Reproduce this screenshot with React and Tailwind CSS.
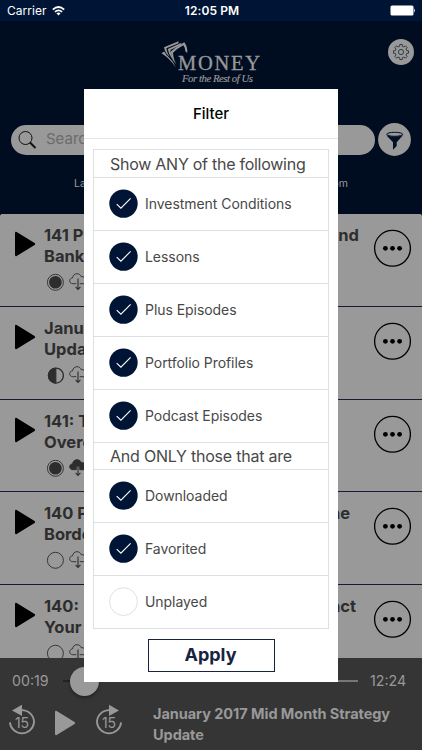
import React from 'react';

function Play({ className }) {
  return (
    <svg className={className} viewBox="0 0 22 26" fill="currentColor">
      <path d="M1 2.2Q1 .3 2.7 1.1L20.6 11.9Q21.8 13 20.6 14L2.7 24.9Q1 25.7 1 23.8Z" />
    </svg>
  );
}

function Cloud({ filled }) {
  return (
    <svg className="h-[18px] w-[20px]" viewBox="0 0 20 18" fill="none" stroke="#2d2d2d" strokeWidth="0.9">
      <path
        d="M7.3 10.7H3.8C1.8 10.7.7 9.3.7 7.7c0-1.7 1.3-2.8 2.8-2.8C3.9 2.3 5.7.7 8 .7c2.2 0 3.7 1.3 4.2 3 2.3-.5 4 .9 4 2.6 1.7.1 3 1 3 2.4 0 1.3-1 2-2.3 2H10.7"
        fill={filled ? '#2d2d2d' : 'none'}
      />
      {filled && <path d="M9 7.5V16.2" stroke="#999" strokeWidth="2.4" />}
      <path d="M9 5.5V16.2M6.6 13.8L9 16.4L11.4 13.8" strokeWidth="1.1" />
    </svg>
  );
}

function Status({ kind }) {
  return (
    <svg className="h-[18px] w-[18px]" viewBox="0 0 18 18" fill="none" stroke="#2d2d2d">
      {kind === 'full' && (
        <>
          <circle cx="9.4" cy="9.3" r="8" strokeWidth="0.9" />
          <circle cx="9.4" cy="9.3" r="6.3" fill="#2d2d2d" stroke="none" />
        </>
      )}
      {kind === 'half' && (
        <>
          <circle cx="9.9" cy="9.6" r="7.5" strokeWidth="1.3" />
          <path d="M9.9 2.1A7.5 7.5 0 0 0 9.9 17.1Z" fill="#2d2d2d" />
        </>
      )}
      {kind === 'empty' && <circle cx="9.4" cy="9.3" r="8" strokeWidth="0.9" />}
    </svg>
  );
}

const episodes = [
  { a: '141 Plus', end: 'and', b: 'Banks', kind: 'full', h: 'h-[93px]', pad: '' },
  { a: 'January', end: '', b: 'Update', kind: 'half', h: 'h-[93px]', pad: '' },
  { a: '141: The', end: '', b: 'Overc', kind: 'full', filled: true, h: 'h-[92px]', pad: '' },
  { a: '140 Plus', end: 'the', b: 'Border', kind: 'empty', h: 'h-[93px]', pad: 'pr-[9px]' },
  { a: '140:', end: 'act', b: 'Your', kind: 'empty', h: 'h-[93px]', pad: 'pr-[3px]' },
];

function Episode({ item }) {
  return (
    <div className={`flex shrink-0 items-start border-b border-[#151b36] bg-[#999] ${item.h}`}>
      <Play className="ml-[14px] mt-[17px] h-[26px] w-[22px] shrink-0 text-black" />
      <div className="ml-2 mt-[11px] w-[315px] text-[16.5px] font-bold leading-[20.5px] text-[#2d2d2d]">
        <div className={`flex justify-between ${item.pad}`}>
          <span>{item.a}</span>
          <span>{item.end}</span>
        </div>
        <div>{item.b}</div>
        <div className="ml-[2px] mt-[7px] flex items-center gap-[5px]">
          <Status kind={item.kind} />
          <Cloud filled={item.filled} />
        </div>
      </div>
      <svg className="ml-[14px] mt-[15px] h-[38px] w-[38px]" viewBox="0 0 38 38">
        <circle cx="19.5" cy="19.3" r="17.9" fill="none" stroke="#000" strokeWidth="1.3" />
        <circle cx="12.4" cy="19.3" r="2.4" />
        <circle cx="19.5" cy="19.3" r="2.4" />
        <circle cx="26.6" cy="19.3" r="2.4" />
      </svg>
    </div>
  );
}

function Option({ label, checked = true, last = false }) {
  return (
    <div className={`flex h-[53px] items-center pb-px pl-[15px] ${last ? '' : 'border-b border-[#dedfe0]'}`}>
      {checked ? (
        <svg className="h-[30px] w-[30px]" viewBox="0 0 30 30">
          <circle cx="14.5" cy="14.6" r="14.2" fill="#001536" />
          <path d="M7.7 15.2L11.9 19.2L21.6 9.4" fill="none" stroke="#fff" strokeWidth="1.1" />
        </svg>
      ) : (
        <svg className="h-[30px] w-[30px]" viewBox="0 0 30 30">
          <circle cx="14.5" cy="14.6" r="13.9" fill="#fff" stroke="#dcdcdc" strokeWidth="0.9" />
        </svg>
      )}
      <span className="ml-[6px] whitespace-nowrap pb-px text-[14px] tracking-[-0.05px] text-[#484848]">{label}</span>
    </div>
  );
}

function Skip({ back }) {
  return (
    <svg className="h-[32px] w-[28px]" viewBox="0 0 28 32" fill="none" stroke="#999" strokeWidth="1.8">
      <g transform={back ? undefined : 'translate(28 0) scale(-1 1)'}>
        <path d="M13 6.2C20.8 6 26 11.7 26 18.3A12.1 12.1 0 0 1 1.9 18.3" />
        <path d="M14 .7V12L4 6.6Z" fill="#999" stroke="none" />
      </g>
      <text x="14" y="23.5" textAnchor="middle" fill="#999" stroke="none" fontSize="14" fontFamily="Inter">15</text>
    </svg>
  );
}

const gear = Array.from({ length: 8 }, (_, i) => {
  const p = (r, d) => {
    const t = ((i * 45 + d - 90) * Math.PI) / 180;
    return `${(13 + r * Math.cos(t)).toFixed(2)} ${(13 + r * Math.sin(t)).toFixed(2)}`;
  };
  return `${i ? 'L' : 'M'}${p(5.8, -14)}L${p(7.6, -9)}L${p(7.6, 9)}L${p(5.8, 14)}`;
}).join('') + 'Z';

export default function App() {
  return (
    <div className="relative flex h-[750px] w-[422px] flex-col overflow-hidden bg-[#000d20] font-['Inter',sans-serif]">
      <div className="grid h-[21px] shrink-0 grid-cols-3 items-center bg-[#001536] px-[7px] text-[12px] text-white">
        <div className="flex items-center gap-[5px] tracking-[0.05px]">
          Carrier
          <svg className="h-[10px] w-[13px]" viewBox="0 0 13 10" fill="none" stroke="#fff" strokeWidth="1.7">
            <path d="M.8 3.6Q6.5-1.6 12.2 3.6M2.9 5.9Q6.5 2.7 10.1 5.9" />
            <path d="M6.5 9.6L4.4 7.3Q6.5 5.7 8.6 7.3Z" fill="#fff" stroke="none" />
          </svg>
        </div>
        <div className="whitespace-nowrap pl-[2px] text-center font-semibold tracking-[0.1px]">12:05 PM</div>
        <svg className="h-[11px] w-[26px] justify-self-end" viewBox="0 0 26 11" fill="#fff">
          <rect x="1.5" y="0.5" width="23" height="10" rx="1.5" />
          <path d="M25 3.5Q26.5 5.5 25 7.5Z" />
        </svg>
      </div>

      <header className="h-[193px] shrink-0">
        <div className="grid h-[70px] grid-cols-[1fr_106px_1fr]">
          <span />
          <svg className="mt-[17px] h-[50px] w-[106px]" viewBox="0 0 106 50" fill="#999">
            <path d="M20.5 3.3L6 9.2Q6.5 12.5 8.5 15.5L11.5 19Q8.8 14 8.3 10.3L20.5 5.2Z" />
            <path d="M23.5 4.7L9.8 11Q10.5 15.5 14 20.5L17.3 25.5Q13 17 12.3 12L22.5 7Z" />
            <path d="M3.5 15.3L6.3 13.5Q8 17 11.5 20Q16 24 17.8 29.5Q12 20.5 3.5 15.3Z" />
            <path d="M12.8 13.5Q17 9.5 26.3 4.2Q29.8 9 29.3 15L27.3 13.2Q27.5 9.8 25.3 7.2Q19 10.5 15 14.7Q15 20 18.3 26.5Q13.5 20.5 12.8 13.5Z" />
            <text x="20" y="31.6" stroke="#999" strokeWidth="0.3" fontSize="20.5" textLength="82" lengthAdjust="spacing" fontFamily="Liberation Serif, serif">MONEY</text>
            <text x="24" y="44.3" stroke="#999" strokeWidth="0.15" fontSize="10.8" fontStyle="italic" textLength="71" fontFamily="Liberation Serif, serif">For the Rest of Us</text>
          </svg>
          <svg className="mr-2 mt-[18px] h-[26px] w-[26px] justify-self-end" viewBox="0 0 26 26">
            <circle cx="13" cy="13" r="13" fill="#999" />
            <path d={gear} fill="none" stroke="#26313e" strokeWidth="0.9" strokeLinejoin="round" />
            <circle cx="13" cy="13" r="2.6" fill="none" stroke="#26313e" strokeWidth="0.9" />
          </svg>
        </div>
        <div className="mt-[32px] flex items-center pl-[11px]">
          <div className="flex h-[30px] w-[364px] items-center rounded-full bg-[#999] pl-[7px] text-[15px] text-[#6b6b6b]">
            <svg className="h-[18px] w-[19px]" viewBox="0 0 19 18" fill="none" stroke="#111">
              <circle cx="7.5" cy="7" r="6.5" strokeWidth="1" />
              <path d="M12 11.5L17.5 17" strokeWidth="1.9" />
            </svg>
            <span className="ml-[9px]">Search</span>
          </div>
          <svg className="ml-[3px] h-[33px] w-[33px]" viewBox="0 0 33 33">
            <circle cx="16.5" cy="16.5" r="16.4" fill="#999" />
            <ellipse cx="16.7" cy="11.3" rx="8" ry="2" fill="#999" stroke="#001026" strokeWidth="1" />
            <path d="M8.3 12.2Q16.7 15 25 12.2L18.7 19.3V23L15 26.8V19.3Z" fill="#001026" />
          </svg>
        </div>
        <div className="ml-[74px] mt-[20px] flex w-[274px] justify-between text-[10.5px] leading-[15px] text-[#999]">
          <span>Last</span>
          <span>pm</span>
        </div>
      </header>

      <main className="flex h-[444px] shrink-0 flex-col overflow-hidden rounded-t-[3px] bg-[#999]">
        {episodes.map((item) => <Episode key={item.a} item={item} />)}
      </main>

      <footer className="h-[92px] shrink-0 bg-[#353535] text-[#999]">
        <div className="flex h-[46px] items-center pl-[12px] text-[14.2px]">
          <span className="w-[51px]">00:19</span>
          <div className="flex w-[295px] items-center">
            <span className="h-[2px] w-[7px] bg-[#222]" />
            <span className="h-[29px] w-[29px] rounded-full bg-[#999] shadow-[0_2px_3px_#0005]" />
            <span className="h-[2px] flex-1 bg-[#777]" />
          </div>
          <span className="ml-[12px]">12:24</span>
        </div>
        <div className="flex pl-2">
          <Skip back />
          <Play className="ml-[18px] mt-[6px] h-[26px] w-[22px]" />
          <div className="ml-[19px]"><Skip /></div>
          <div className="ml-[30px] w-[260px] text-[14.5px] font-bold leading-[20.5px] tracking-[-0.05px]">January 2017 Mid Month Strategy Update</div>
        </div>
      </footer>

      <div className="absolute left-[84px] top-[89px] flex h-[593px] w-[254px] flex-col bg-white">
        <div className="h-[50px] border-b border-[#e5e5e5] text-center text-[15px] font-medium leading-[49px] text-black">Filter</div>
        <div className="mx-[9px] mt-[10px] h-[480px] border border-[#dedfe0]">
          <h2 className="h-[28px] whitespace-nowrap border-b border-[#dedfe0] pl-[16px] text-[16px] leading-[28px] tracking-[-0.26px] text-[#484848]">Show ANY of the following</h2>
          <Option label="Investment Conditions" />
          <Option label="Lessons" />
          <Option label="Plus Episodes" />
          <Option label="Portfolio Profiles" />
          <Option label="Podcast Episodes" />
          <h2 className="h-[27px] whitespace-nowrap border-b border-[#dedfe0] pl-[16px] text-[16px] leading-[27px] tracking-[-0.22px] text-[#484848]">And ONLY those that are</h2>
          <Option label="Downloaded" />
          <Option label="Favorited" />
          <Option label="Unplayed" checked={false} last />
        </div>
        <button className="ml-[64px] mt-[10px] h-[33px] w-[127px] border border-[#17233f] pb-[2px] pr-[2px] text-[18px] font-bold leading-[28px] text-[#17233f]">Apply</button>
      </div>
    </div>
  );
}
